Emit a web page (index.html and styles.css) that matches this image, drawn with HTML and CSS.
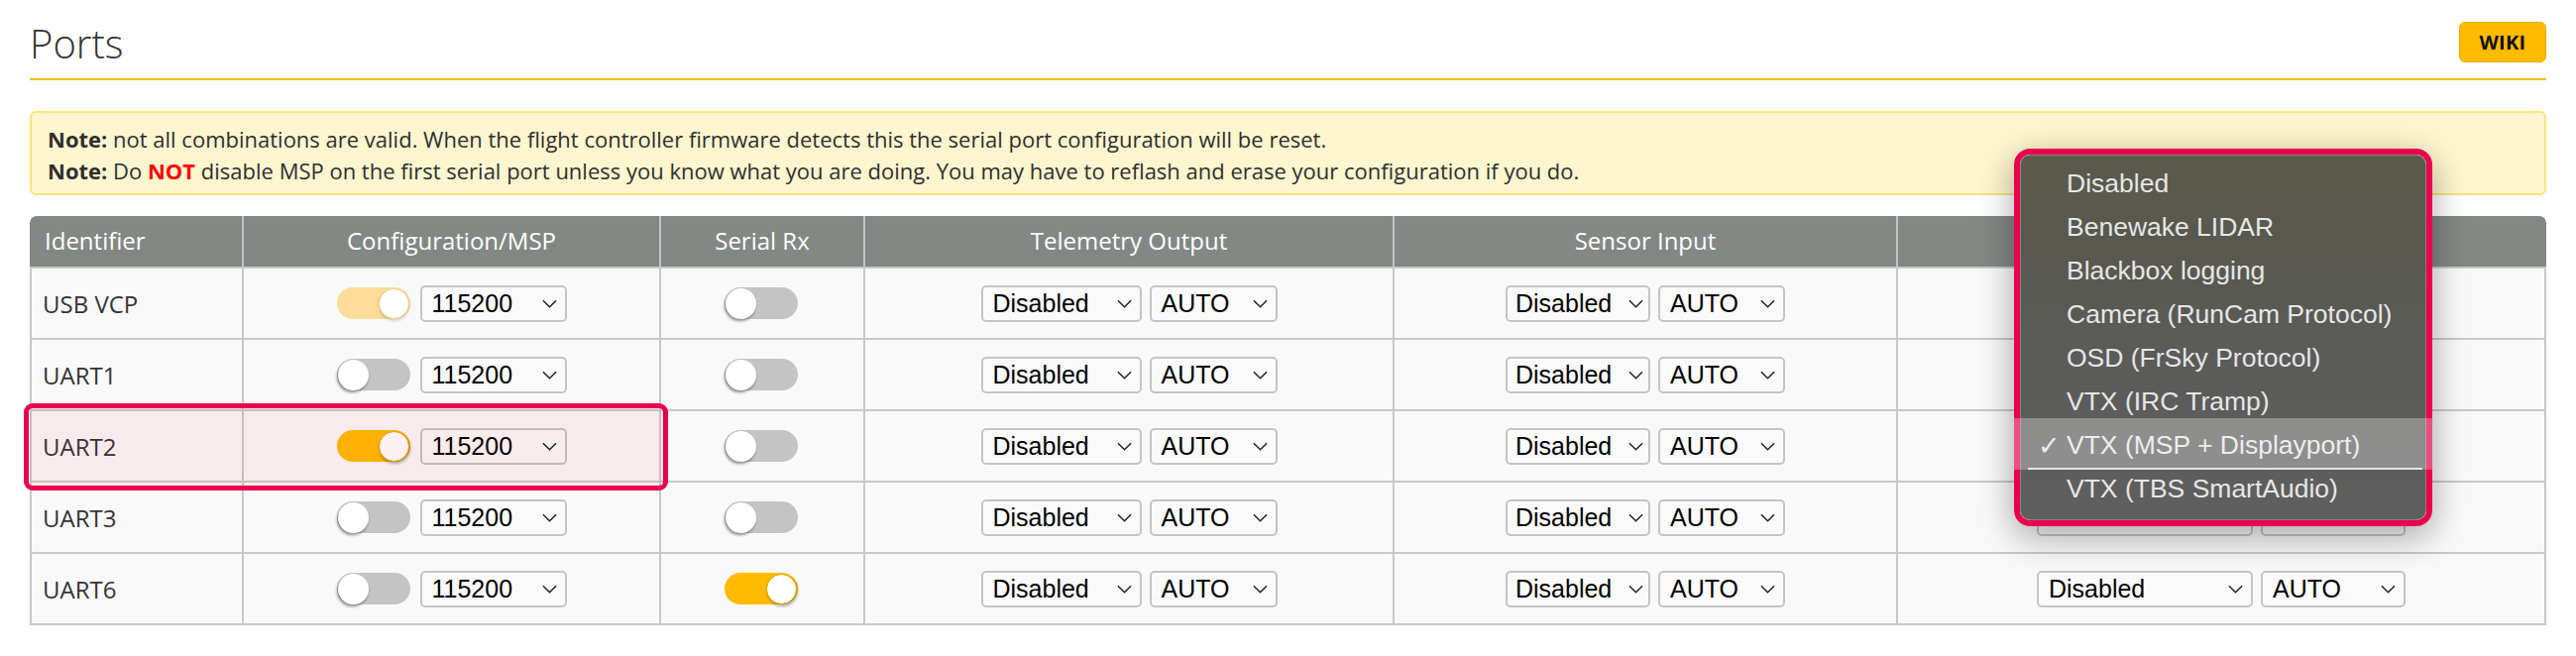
FILE: index.html
```html
<!DOCTYPE html>
<html lang="en">
<head>
<meta charset="utf-8">
<title>Ports</title>
<link rel="stylesheet" href="styles.css">
</head>
<body>
<div class="page">
  <div class="tab-head">
    <h1 class="tab-title">Ports</h1>
    <a class="wiki-btn">WIKI</a>
  </div>

  <div class="note">
    <p><b>Note:</b> not all combinations are valid. When the flight controller firmware detects this the serial port configuration will be reset.</p>
    <p><b>Note:</b> Do <b class="red">NOT</b> disable MSP on the first serial port unless you know what you are doing. You may have to reflash and erase your configuration if you do.</p>
  </div>

  <div class="ports">
    <div class="th th-first th-left">Identifier</div>
    <div class="th">Configuration/MSP</div>
    <div class="th">Serial Rx</div>
    <div class="th">Telemetry Output</div>
    <div class="th">Sensor Input</div>
    <div class="th th-last">Peripherals</div>

    <!-- USB VCP -->
    <div class="td td-first td-id">USB VCP</div>
    <div class="td"><span class="toggle on faded"><span class="knob"></span></span><span class="sel w148"><span>115200</span><svg class="chev" viewBox="0 0 16 9"><path d="M1 1 L8 8 L15 1"/></svg></span></div>
    <div class="td"><span class="toggle"><span class="knob"></span></span></div>
    <div class="td"><span class="sel w162"><span>Disabled</span><svg class="chev" viewBox="0 0 16 9"><path d="M1 1 L8 8 L15 1"/></svg></span><span class="sel w129"><span>AUTO</span><svg class="chev" viewBox="0 0 16 9"><path d="M1 1 L8 8 L15 1"/></svg></span></div>
    <div class="td"><span class="sel w146 tight"><span>Disabled</span><svg class="chev" viewBox="0 0 16 9"><path d="M1 1 L8 8 L15 1"/></svg></span><span class="sel w128"><span>AUTO</span><svg class="chev" viewBox="0 0 16 9"><path d="M1 1 L8 8 L15 1"/></svg></span></div>
    <div class="td"><span class="sel w218"><span>Disabled</span><svg class="chev" viewBox="0 0 16 9"><path d="M1 1 L8 8 L15 1"/></svg></span><span class="sel w146"><span>AUTO</span><svg class="chev" viewBox="0 0 16 9"><path d="M1 1 L8 8 L15 1"/></svg></span></div>

    <!-- UART1 -->
    <div class="td td-first td-id">UART1</div>
    <div class="td"><span class="toggle"><span class="knob"></span></span><span class="sel w148"><span>115200</span><svg class="chev" viewBox="0 0 16 9"><path d="M1 1 L8 8 L15 1"/></svg></span></div>
    <div class="td"><span class="toggle"><span class="knob"></span></span></div>
    <div class="td"><span class="sel w162"><span>Disabled</span><svg class="chev" viewBox="0 0 16 9"><path d="M1 1 L8 8 L15 1"/></svg></span><span class="sel w129"><span>AUTO</span><svg class="chev" viewBox="0 0 16 9"><path d="M1 1 L8 8 L15 1"/></svg></span></div>
    <div class="td"><span class="sel w146 tight"><span>Disabled</span><svg class="chev" viewBox="0 0 16 9"><path d="M1 1 L8 8 L15 1"/></svg></span><span class="sel w128"><span>AUTO</span><svg class="chev" viewBox="0 0 16 9"><path d="M1 1 L8 8 L15 1"/></svg></span></div>
    <div class="td"><span class="sel w218"><span>Disabled</span><svg class="chev" viewBox="0 0 16 9"><path d="M1 1 L8 8 L15 1"/></svg></span><span class="sel w146"><span>AUTO</span><svg class="chev" viewBox="0 0 16 9"><path d="M1 1 L8 8 L15 1"/></svg></span></div>

    <!-- UART2 -->
    <div class="td td-first td-id">UART2</div>
    <div class="td"><span class="toggle on"><span class="knob"></span></span><span class="sel w148"><span>115200</span><svg class="chev" viewBox="0 0 16 9"><path d="M1 1 L8 8 L15 1"/></svg></span></div>
    <div class="td"><span class="toggle"><span class="knob"></span></span></div>
    <div class="td"><span class="sel w162"><span>Disabled</span><svg class="chev" viewBox="0 0 16 9"><path d="M1 1 L8 8 L15 1"/></svg></span><span class="sel w129"><span>AUTO</span><svg class="chev" viewBox="0 0 16 9"><path d="M1 1 L8 8 L15 1"/></svg></span></div>
    <div class="td"><span class="sel w146 tight"><span>Disabled</span><svg class="chev" viewBox="0 0 16 9"><path d="M1 1 L8 8 L15 1"/></svg></span><span class="sel w128"><span>AUTO</span><svg class="chev" viewBox="0 0 16 9"><path d="M1 1 L8 8 L15 1"/></svg></span></div>
    <div class="td"><span class="sel w218"><span>Disabled</span><svg class="chev" viewBox="0 0 16 9"><path d="M1 1 L8 8 L15 1"/></svg></span><span class="sel w146"><span>AUTO</span><svg class="chev" viewBox="0 0 16 9"><path d="M1 1 L8 8 L15 1"/></svg></span></div>

    <!-- UART3 -->
    <div class="td td-first td-id">UART3</div>
    <div class="td"><span class="toggle"><span class="knob"></span></span><span class="sel w148"><span>115200</span><svg class="chev" viewBox="0 0 16 9"><path d="M1 1 L8 8 L15 1"/></svg></span></div>
    <div class="td"><span class="toggle"><span class="knob"></span></span></div>
    <div class="td"><span class="sel w162"><span>Disabled</span><svg class="chev" viewBox="0 0 16 9"><path d="M1 1 L8 8 L15 1"/></svg></span><span class="sel w129"><span>AUTO</span><svg class="chev" viewBox="0 0 16 9"><path d="M1 1 L8 8 L15 1"/></svg></span></div>
    <div class="td"><span class="sel w146 tight"><span>Disabled</span><svg class="chev" viewBox="0 0 16 9"><path d="M1 1 L8 8 L15 1"/></svg></span><span class="sel w128"><span>AUTO</span><svg class="chev" viewBox="0 0 16 9"><path d="M1 1 L8 8 L15 1"/></svg></span></div>
    <div class="td"><span class="sel w218"><span>Disabled</span><svg class="chev" viewBox="0 0 16 9"><path d="M1 1 L8 8 L15 1"/></svg></span><span class="sel w146"><span>AUTO</span><svg class="chev" viewBox="0 0 16 9"><path d="M1 1 L8 8 L15 1"/></svg></span></div>

    <!-- UART6 -->
    <div class="td td-first td-id">UART6</div>
    <div class="td"><span class="toggle"><span class="knob"></span></span><span class="sel w148"><span>115200</span><svg class="chev" viewBox="0 0 16 9"><path d="M1 1 L8 8 L15 1"/></svg></span></div>
    <div class="td"><span class="toggle on"><span class="knob"></span></span></div>
    <div class="td"><span class="sel w162"><span>Disabled</span><svg class="chev" viewBox="0 0 16 9"><path d="M1 1 L8 8 L15 1"/></svg></span><span class="sel w129"><span>AUTO</span><svg class="chev" viewBox="0 0 16 9"><path d="M1 1 L8 8 L15 1"/></svg></span></div>
    <div class="td"><span class="sel w146 tight"><span>Disabled</span><svg class="chev" viewBox="0 0 16 9"><path d="M1 1 L8 8 L15 1"/></svg></span><span class="sel w128"><span>AUTO</span><svg class="chev" viewBox="0 0 16 9"><path d="M1 1 L8 8 L15 1"/></svg></span></div>
    <div class="td"><span class="sel w218"><span>Disabled</span><svg class="chev" viewBox="0 0 16 9"><path d="M1 1 L8 8 L15 1"/></svg></span><span class="sel w146"><span>AUTO</span><svg class="chev" viewBox="0 0 16 9"><path d="M1 1 L8 8 L15 1"/></svg></span></div>
  </div>
</div>

<div class="highlight-uart2"></div>

<div class="menu">
  <div class="menu-panel">
    <div class="item"><span class="check"></span>Disabled</div>
    <div class="item"><span class="check"></span>Benewake LIDAR</div>
    <div class="item"><span class="check"></span>Blackbox logging</div>
    <div class="item"><span class="check"></span>Camera (RunCam Protocol)</div>
    <div class="item"><span class="check"></span>OSD (FrSky Protocol)</div>
    <div class="item"><span class="check"></span>VTX (IRC Tramp)</div>
    <div class="item selected"><span class="check">✓</span>VTX (MSP + Displayport)</div>
    <div class="item"><span class="check"></span>VTX (TBS SmartAudio)</div>
  </div>
</div>
</body>
</html>
```

FILE: styles.css
```css
* { box-sizing: border-box; }

html, body {
  margin: 0;
  padding: 0;
  background: #ffffff;
}

body {
  font-family: "Open Sans", "Liberation Sans", sans-serif;
  color: #333333;
  position: relative;
  width: 2599px;
  height: 662px;
  overflow: hidden;
}

.page {
  padding: 0 30px;
}

/* ---------- title row ---------- */
.tab-head {
  display: flex;
  justify-content: space-between;
  align-items: flex-start;
  height: 81px;
  border-bottom: 2px solid #ffbb00;
}

.tab-title {
  margin: 16px 0 0 0;
  font-size: 40px;
  font-weight: 300;
  line-height: 56px;
  color: #333333;
}

.wiki-btn {
  margin-top: 22px;
  width: 88px;
  height: 41px;
  display: flex;
  align-items: center;
  justify-content: center;
  background: #ffbb00;
  border: 1px solid #e9ad00;
  border-radius: 6px;
  font-size: 20px;
  font-weight: 700;
  color: #111111;
  letter-spacing: 0.3px;
}

/* ---------- note ---------- */
.note {
  margin-top: 31px;
  background: #fef6cf;
  border: 2px solid #fde37a;
  border-radius: 6px;
  padding: 10px 16px 7px;
  font-size: 22px;
  line-height: 32px;
  color: #2f2f2f;
}

.note p { margin: 0; }
.note b { font-weight: 700; }
.note .red { color: #ff0000; }

/* ---------- ports grid ---------- */
.ports {
  margin-top: 21px;
  display: grid;
  grid-template-columns: 216px 421px 206px 534px 508px 654px;
  grid-template-rows: 53px repeat(5, 72px);
}

.th {
  background: #838885;
  color: #ffffff;
  font-size: 24px;
  display: flex;
  align-items: center;
  justify-content: center;
  border-right: 2px solid #c3c5c4;
  border-bottom: 2px solid #c8c8c8;
  padding-bottom: 2px;
}

.th-left {
  justify-content: flex-start;
  padding-left: 15px;
}

.th-first {
  border-top-left-radius: 7px;
}

.th-last {
  border-right: none;
  border-top-right-radius: 7px;
}

.td {
  background: #f9f9f9;
  border-right: 2px solid #c8c8c8;
  border-bottom: 2px solid #c8c8c8;
  display: flex;
  align-items: center;
  justify-content: center;
  gap: 8px;
}

.td-first {
  border-left: 2px solid #c8c8c8;
}

.td-id {
  justify-content: flex-start;
  padding-left: 11px;
  font-size: 24px;
  color: #333333;
}

/* ---------- toggle ---------- */
.toggle {
  width: 74px;
  height: 32px;
  border-radius: 16px;
  background: #c4c4c4;
  display: flex;
  align-items: center;
  justify-content: flex-start;
  padding: 0 1px;
  margin-right: 2px;
}

.toggle .knob {
  width: 31px;
  height: 31px;
  border-radius: 50%;
  background: #ffffff;
  box-shadow: -1px 2px 3px rgba(0, 0, 0, 0.45);
}

.toggle.on {
  background: #ffbb00;
  justify-content: flex-end;
}

.toggle.on .knob {
  border: 1px solid #e3a300;
  box-shadow: 1px 2px 3px rgba(0, 0, 0, 0.3);
}

.toggle.faded {
  background: #fcdc96;
}

.toggle.faded .knob {
  border-color: #efcf8d;
  box-shadow: 0 2px 3px rgba(0, 0, 0, 0.15);
}

/* ---------- select ---------- */
.sel {
  height: 37px;
  border: 2px solid #c4c4c4;
  border-radius: 5px;
  background: #fafafa;
  display: flex;
  align-items: center;
  justify-content: space-between;
  padding: 0 8px 0 10px;
  font-family: "Liberation Sans", Arial, sans-serif;
  font-size: 25px;
  color: #000000;
}

.sel.tight { padding-left: 8px; padding-right: 5px; }

.chev {
  width: 15px;
  height: 9px;
  fill: none;
  stroke: #222222;
  stroke-width: 1.6;
  flex: none;
}

.w128 { width: 128px; }
.w129 { width: 129px; }
.w146 { width: 146px; }
.w148 { width: 148px; }
.w162 { width: 162px; }
.w218 { width: 218px; }

/* ---------- UART2 annotation ---------- */
.highlight-uart2 {
  position: absolute;
  left: 24px;
  top: 407px;
  width: 650px;
  height: 88px;
  border: 5px solid #e8004e;
  border-radius: 9px;
  background: rgba(230, 0, 60, 0.055);
  pointer-events: none;
}

/* ---------- open dropdown menu ---------- */
.menu {
  position: absolute;
  left: 2032px;
  top: 150px;
  width: 422px;
  height: 381px;
  border: 6px solid #e8004e;
  border-radius: 16px;
  box-shadow: 0 10px 36px rgba(0, 0, 0, 0.35);
  z-index: 5;
}

.menu-panel {
  height: 100%;
  border: 1px solid #85857c;
  border-radius: 10px;
  background: linear-gradient(180deg, #5b5a4b 0%, #58584f 25%, #5b5b59 55%, #5f5f5f 100%);
  padding: 6px 0 9px;
  font-family: "Liberation Sans", Arial, sans-serif;
  font-size: 26.5px;
  color: #e6e6e6;
}

.item {
  height: 44px;
  display: flex;
  align-items: center;
  padding-left: 17px;
  position: relative;
}

.check {
  width: 29px;
  flex: none;
  font-family: "DejaVu Sans", sans-serif;
  font-size: 27px;
  color: #e6e6e6;
}

.item.selected::before {
  content: "";
  position: absolute;
  left: -7px;
  right: -7px;
  top: -5px;
  bottom: -3px;
  background: rgba(255, 255, 255, 0.3);
}

.item.selected::after {
  content: "";
  position: absolute;
  left: 7px;
  right: 3px;
  bottom: -3px;
  height: 2px;
  background: #e4e4e4;
}
```
